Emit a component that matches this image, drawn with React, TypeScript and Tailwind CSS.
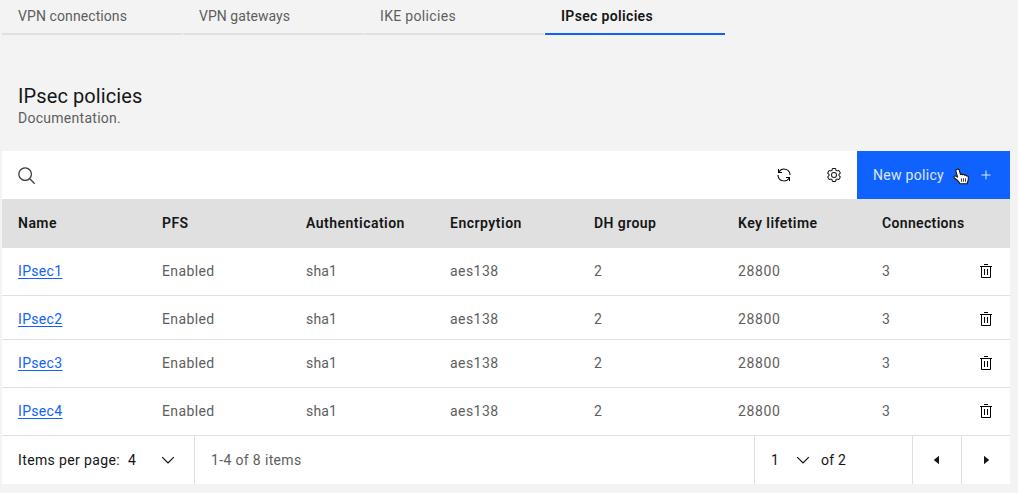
import type { ReactNode } from 'react';

type Cell = { label: string; className: string };

const tabs = [
  { label: 'VPN connections', tracking: 'tracking-[0.09px]' },
  { label: 'VPN gateways', tracking: 'tracking-[0.04px]' },
  { label: 'IKE policies', tracking: 'tracking-[0.33px]' },
];

const columns: Cell[] = [
  { label: 'Name', className: 'tracking-[0.47px]' },
  { label: 'PFS', className: 'tracking-[0.43px]' },
  { label: 'Authentication', className: 'tracking-[0.48px]' },
  { label: 'Encrpytion', className: 'tracking-[0.5px]' },
  { label: 'DH group', className: 'tracking-[0.42px]' },
  { label: 'Key lifetime', className: 'tracking-[0.44px]' },
  { label: 'Connections', className: 'tracking-[0.34px]' },
];

const values: Cell[] = [
  { label: 'Enabled', className: 'tracking-[0.37px]' },
  { label: 'sha1', className: 'tracking-[0.15px]' },
  { label: 'aes138', className: 'tracking-[0.44px]' },
  { label: '2', className: '' },
  { label: '28800', className: 'tracking-[0.63px]' },
  { label: '3', className: '' },
];

const rows = [
  { name: 'IPsec1', height: 'h-12' },
  { name: 'IPsec2', height: 'h-11' },
  { name: 'IPsec3', height: 'h-12' },
  { name: 'IPsec4', height: 'h-12' },
];

function Icon({ size = 16, box = 32, className = '', children }: { size?: number; box?: number; className?: string; children: ReactNode }) {
  return (
    <svg width={size} height={size} viewBox={`0 0 ${box} ${box}`} fill="currentColor" className={`shrink-0 ${className}`} aria-hidden="true">
      {children}
    </svg>
  );
}

function ChevronDown({ className = '' }: { className?: string }) {
  return (
    <Icon size={20} box={16} className={className}>
      <path d="M8 11L3 6 3.7 5.3 8 9.6 12.3 5.3 13 6z" />
    </Icon>
  );
}

function TrashCan() {
  return (
    <Icon className="mt-px text-black">
      <path d="M12 12H14V24H12zM18 12H20V24H18z" />
      <path d="M4 6V8H6V28a2 2 0 0 0 2 2H24a2 2 0 0 0 2-2V8h2V6ZM8 28V8H24V28Z" />
      <path d="M12 2H20V4H12z" />
    </Icon>
  );
}

function PointerHand() {
  return (
    <svg width="17" height="18" viewBox="0 0 17 18" className="absolute left-[96px] top-[17px]" aria-hidden="true">
      <path
        d="M4.2 1.200c1-.3 1.800.1 2.100 1.100l1.200 4.200c.6-.6 1.700-.4 2.100.3.600-.5 1.700-.3 2.100.5.800-.4 1.600-.1 2 .6.800-.2 1.500.2 1.600 1.200.1 1.500 0 3-.6 4.300-.4.700-.5 1.300-.5 2.300H6.700c-.2-1.300-.9-2-1.900-3C3.700 11.600 2.500 10.600 1.200 9.700c-.6-.6-.3-1.500.5-1.700 1-.2 1.900.3 2.900 1.100L2.900 3.100c-.3-.9.300-1.700 1.300-1.900Z"
        fill="white"
        stroke="#161616"
        strokeWidth="1.1"
        strokeLinejoin="round"
      />
      <path d="M8.500 10.300v3.500M10.500 10.300v3.500M12.500 10.300v3.500" stroke="#161616" strokeWidth=".8" fill="none" />
    </svg>
  );
}

export default function App() {
  return (
    <div className="h-[493px] w-[1018px] overflow-hidden bg-[#f3f3f3] pl-0.5 font-[Roboto,'Liberation_Sans',sans-serif] text-[14px] leading-[18px] text-[#5e5e5e]">
      <nav className="flex h-[35px] gap-px">
        {tabs.map((t) => (
          <div key={t.label} className={`w-[180px] border-b-2 border-[#e0e0e0] pl-4 pt-[7px] ${t.tracking}`}>
            {t.label}
          </div>
        ))}
        <div className="w-[180px] border-b-2 border-[#0f62fe] pl-4 pt-[7px] font-semibold tracking-[0.34px] text-[#161616]">IPsec policies</div>
      </nav>

      <header className="h-[116px] pl-4 pt-[48px]">
        <h1 className="text-[20px] leading-[26px] tracking-[0.1px] text-[#161616]">IPsec policies</h1>
        <p className="tracking-[0.27px]">Documentation.</p>
      </header>

      <main className="w-[1008px] bg-white">
        <div className="flex h-12 items-center">
          <div className="flex-1 pl-[14.5px] pt-px text-[#3f3f3f]">
            <Icon size={20}>
              <path d="M29,27.5859l-7.5521-7.5521a11.0177,11.0177,0,1,0-1.4141,1.4141L27.5859,29ZM4,13a9,9,0,1,1,9,9A9.01,9.01,0,0,1,4,13Z" />
            </Icon>
          </div>
          <Icon className="mr-[34px] text-black">
            <path d="M12 10H6.78A11 11 0 0127 16h2A13 13 0 006 7.68V4H4v8h8zM20 22h5.22A11 11 0 015 16H3a13 13 0 0023 8.32V28h2V20H20z" />
          </Icon>
          <Icon className="mr-[15px] text-[#161616]">
            <path d="M27,16.76c0-.25,0-.5,0-.76s0-.51,0-.77l1.92-1.68A2,2,0,0,0,29.3,11L26.94,7a2,2,0,0,0-1.73-1,2,2,0,0,0-.64.1l-2.43.82a11.35,11.35,0,0,0-1.31-.75l-.51-2.52a2,2,0,0,0-2-1.61H13.64a2,2,0,0,0-2,1.61l-.51,2.52a11.48,11.48,0,0,0-1.32.75L7.43,6.06A2,2,0,0,0,6.79,6,2,2,0,0,0,5.06,7L2.7,11a2,2,0,0,0,.41,2.51L5,15.24c0,.25,0,.5,0,.76s0,.51,0,.77L3.11,18.45A2,2,0,0,0,2.7,21L5.06,25a2,2,0,0,0,1.73,1,2,2,0,0,0,.64-.1l2.43-.82a11.35,11.35,0,0,0,1.31.75l.51,2.52a2,2,0,0,0,2,1.61h4.72a2,2,0,0,0,2-1.61l.51-2.52a11.48,11.48,0,0,0,1.32-.75l2.42.82a2,2,0,0,0,.64.1,2,2,0,0,0,1.73-1L29.3,21a2,2,0,0,0-.41-2.51ZM25.21,24l-3.43-1.16a8.86,8.86,0,0,1-2.71,1.57L18.36,28H13.64l-.71-3.55a9.36,9.36,0,0,1-2.7-1.57L6.79,24,4.43,20l2.72-2.4a8.9,8.9,0,0,1,0-3.13L4.43,12,6.79,8l3.43,1.16a8.86,8.86,0,0,1,2.71-1.57L13.64,4h4.72l.71,3.55a9.36,9.36,0,0,1,2.7,1.57L25.21,8,27.57,12l-2.72,2.4a8.9,8.9,0,0,1,0,3.13L27.57,20Z" />
            <path d="M16,22a6,6,0,1,1,6-6A5.94,5.94,0,0,1,16,22Zm0-10a3.91,3.91,0,0,0-4,4,3.91,3.91,0,0,0,4,4,3.91,3.91,0,0,0,4-4A3.91,3.91,0,0,0,16,12Z" />
          </Icon>
          <button className="relative flex h-12 w-[153px] items-center justify-between bg-[#0f62fe] px-4 text-white/85">
            <span className="tracking-[0.3px]">New policy</span>
            <PointerHand />
            <Icon>
              <path d="M17 15V7H15v8H7v2h8v8h2V17h8V15Z" />
            </Icon>
          </button>
        </div>

        <div className="grid h-[49px] grid-cols-7 bg-[#e0e0e0] pt-[15px] font-semibold text-[#161616]">
          {columns.map((c) => (
            <div key={c.label} className={`pl-4 ${c.className}`}>
              {c.label}
            </div>
          ))}
        </div>

        {rows.map((r) => (
          <div key={r.name} className={`grid grid-cols-7 border-b border-[#e0e0e0] pt-[14px] ${r.height}`}>
            <div className="pl-4">
              <a className="tracking-[0.33px] text-[#0f62fe] underline underline-offset-2">{r.name}</a>
            </div>
            {values.map((v, i) => (
              <div key={i} className={`flex justify-between pl-4 pr-4 ${v.className}`}>
                <span>{v.label}</span>
                {i === values.length - 1 && <TrashCan />}
              </div>
            ))}
          </div>
        ))}

        <footer className="flex h-12 items-stretch text-[#161616]">
          <div className="flex w-[193px] items-center border-r border-[#e0e0e0] pl-4">
            <span className="w-[110px] tracking-[0.37px]">Items per page:</span>
            <span>4</span>
            <ChevronDown className="ml-auto mr-4" />
          </div>
          <div className="flex flex-1 items-center pl-4 tracking-[0.35px] text-[#5e5e5e]">1-4 of 8 items</div>
          <div className="flex w-[158px] items-center border-l border-[#e0e0e0] pl-4">
            <span className="w-[22px]">1</span>
            <ChevronDown />
            <span className="ml-2 tracking-[0.2px]">of 2</span>
          </div>
          <div className="flex w-[49px] items-center justify-center border-l border-[#e0e0e0]">
            <Icon box={16}>
              <path d="M10 3.800v8.400L4.800 8z" />
            </Icon>
          </div>
          <div className="flex w-[49px] items-center justify-center border-l border-[#e0e0e0]">
            <Icon box={16}>
              <path d="M6 3.800v8.400L11.200 8z" />
            </Icon>
          </div>
        </footer>
      </main>
    </div>
  );
}
